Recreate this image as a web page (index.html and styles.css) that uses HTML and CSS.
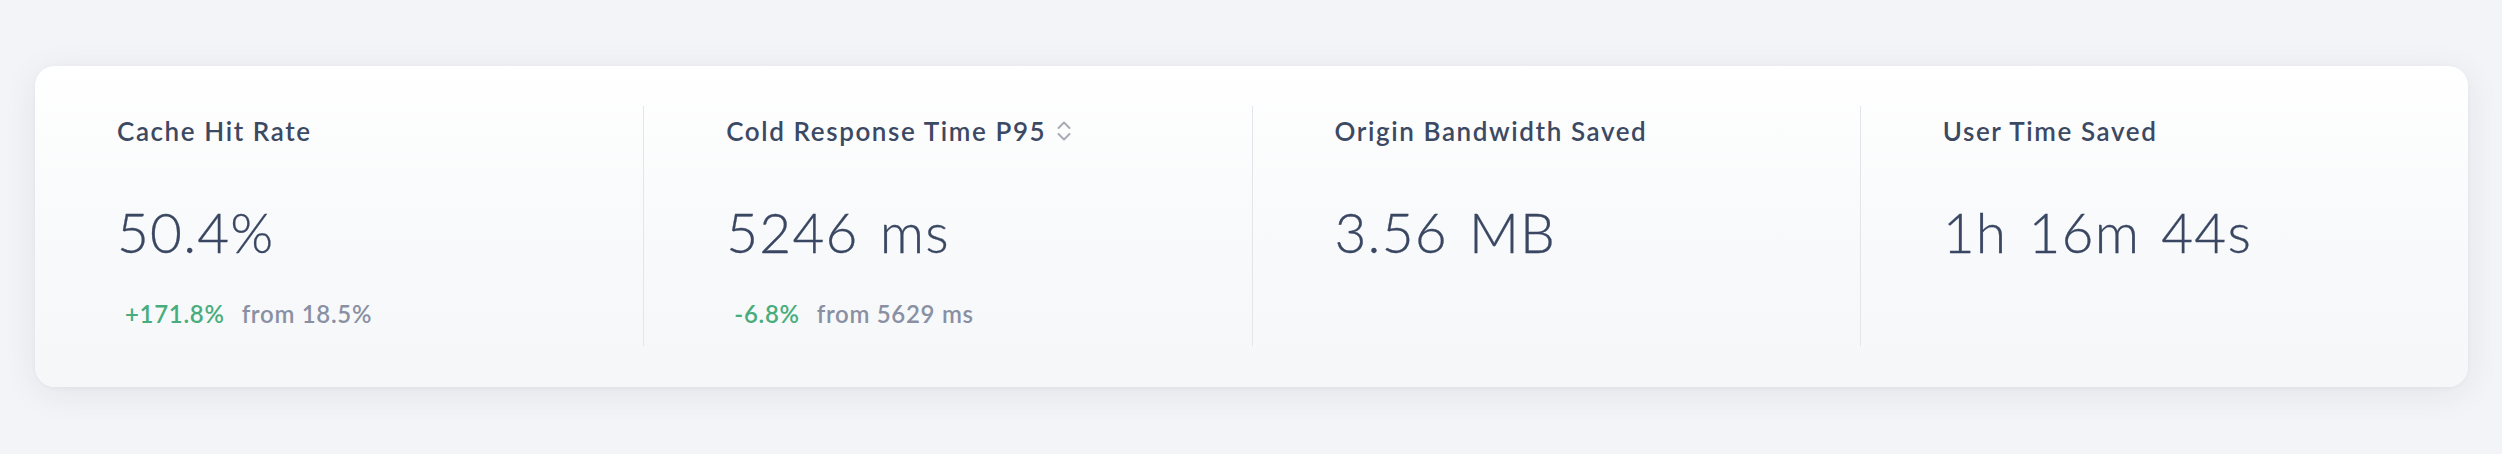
FILE: index.html
```html
<!DOCTYPE html>
<html lang="en">
<head>
<meta charset="utf-8">
<title>Cache stats</title>
<link rel="stylesheet" href="styles.css">
</head>
<body>
<div class="page">
  <section class="card">
    <div class="stat">
      <div class="label">Cache Hit Rate</div>
      <div class="value">50.4%</div>
      <div class="delta"><span class="change">+171.8%</span><span class="from">from 18.5%</span></div>
    </div>
    <div class="stat">
      <div class="label">Cold Response Time P95
        <svg class="sort" viewBox="0 0 14 22" width="14" height="22" aria-hidden="true"><polyline points="1.5,8 7,2.5 12.5,8"/><polyline points="1.5,14 7,19.5 12.5,14"/></svg>
      </div>
      <div class="value">5246 ms</div>
      <div class="delta"><span class="change">-6.8%</span><span class="from">from 5629 ms</span></div>
    </div>
    <div class="stat">
      <div class="label">Origin Bandwidth Saved</div>
      <div class="value">3.56 MB</div>
    </div>
    <div class="stat">
      <div class="label">User Time Saved</div>
      <div class="value">1h 16m 44s</div>
    </div>
  </section>
</div>
</body>
</html>
```
FILE: styles.css
```css
* { box-sizing: border-box; }
html, body { margin: 0; padding: 0; }
body {
  background: #f3f4f7;
  font-family: "Lato", "Liberation Sans", sans-serif;
  color: #3c4963;
}
.page {
  padding: 66px 34px 66px 35px;
}
.card {
  display: grid;
  grid-template-columns: repeat(4, 1fr);
  height: 321px;
  padding: 40px 0 41px;
  border-radius: 20px;
  background: linear-gradient(180deg, #ffffff 0%, #f9fafb 45%, #f6f7f9 100%);
  box-shadow: 0 6px 34px rgba(30, 40, 70, 0.08), 0 1px 4px rgba(30, 40, 70, 0.04);
}
.stat {
  display: flex;
  flex-direction: column;
  padding: 9px 0 0 82px;
  border-left: 1px solid #e2e5eb;
}
.stat:first-child { border-left: none; }
.label {
  display: flex;
  align-items: center;
  gap: 11px;
  font-size: 26px;
  line-height: 32px;
  font-weight: 600;
  letter-spacing: 1.6px;
  color: #3c4963;
}
.sort {
  fill: none;
  stroke: #a6aab5;
  stroke-width: 2;
  stroke-linecap: round;
  stroke-linejoin: round;
}
.value {
  margin-top: 53px;
  font-size: 55px;
  line-height: 64px;
  font-weight: 300;
  letter-spacing: 1.2px;
  word-spacing: 5px;
  color: #3a4762;
  -webkit-text-stroke: 0.3px #3a4762;
}
.delta {
  margin-top: 36px;
  padding-left: 8px;
  display: flex;
  gap: 17px;
  font-size: 24px;
  line-height: 28px;
  font-weight: 600;
  letter-spacing: 0.7px;
}
.change { color: #47ad7c; }
.from { color: #8a90a3; }
```
